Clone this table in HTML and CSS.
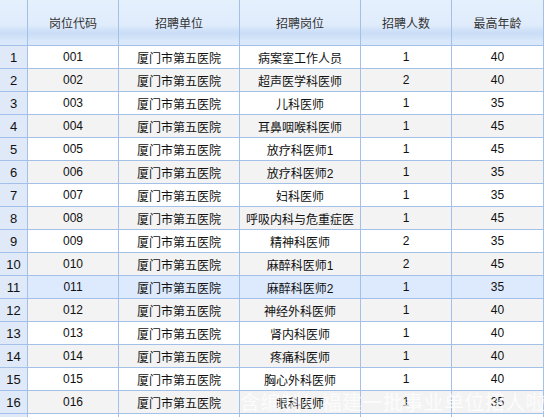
FILE: index.html
```html
<!DOCTYPE html>
<html>
<head>
<meta charset="utf-8">
<link rel="stylesheet" href="styles.css">
</head>
<body>
<div class="sheet">
  <div class="grid">
    <div class="hd idx"></div><div class="hd">岗位代码</div><div class="hd">招聘单位</div><div class="hd">招聘岗位</div><div class="hd">招聘人数</div><div class="hd">最高年龄</div>
    <div class="idx">1</div><div>001</div><div>厦门市第五医院</div><div>病案室工作人员</div><div>1</div><div>40</div>
    <div class="idx">2</div><div class="alt">002</div><div class="alt">厦门市第五医院</div><div class="alt">超声医学科医师</div><div class="alt">2</div><div class="alt">40</div>
    <div class="idx">3</div><div>003</div><div>厦门市第五医院</div><div>儿科医师</div><div>1</div><div>35</div>
    <div class="idx">4</div><div class="alt">004</div><div class="alt">厦门市第五医院</div><div class="alt">耳鼻咽喉科医师</div><div class="alt">1</div><div class="alt">45</div>
    <div class="idx">5</div><div>005</div><div>厦门市第五医院</div><div>放疗科医师1</div><div>1</div><div>45</div>
    <div class="idx">6</div><div class="alt">006</div><div class="alt">厦门市第五医院</div><div class="alt">放疗科医师2</div><div class="alt">1</div><div class="alt">35</div>
    <div class="idx">7</div><div>007</div><div>厦门市第五医院</div><div>妇科医师</div><div>1</div><div>35</div>
    <div class="idx">8</div><div class="alt">008</div><div class="alt">厦门市第五医院</div><div class="alt">呼吸内科与危重症医</div><div class="alt">1</div><div class="alt">45</div>
    <div class="idx">9</div><div>009</div><div>厦门市第五医院</div><div>精神科医师</div><div>2</div><div>35</div>
    <div class="idx">10</div><div class="alt">010</div><div class="alt">厦门市第五医院</div><div class="alt">麻醉科医师1</div><div class="alt">2</div><div class="alt">45</div>
    <div class="idx sel">11</div><div class="sel">011</div><div class="sel">厦门市第五医院</div><div class="sel">麻醉科医师2</div><div class="sel">1</div><div class="sel">35</div>
    <div class="idx">12</div><div class="alt">012</div><div class="alt">厦门市第五医院</div><div class="alt">神经外科医师</div><div class="alt">1</div><div class="alt">40</div>
    <div class="idx">13</div><div>013</div><div>厦门市第五医院</div><div>肾内科医师</div><div>1</div><div>40</div>
    <div class="idx">14</div><div class="alt">014</div><div class="alt">厦门市第五医院</div><div class="alt">疼痛科医师</div><div class="alt">1</div><div class="alt">40</div>
    <div class="idx">15</div><div>015</div><div>厦门市第五医院</div><div>胸心外科医师</div><div>1</div><div>40</div>
    <div class="idx">16</div><div class="alt">016</div><div class="alt">厦门市第五医院</div><div class="alt">眼科医师</div><div class="alt">1</div><div class="alt">35</div>
    <div class="idx"></div><div></div><div></div><div></div><div></div><div></div>
  </div>
  <div class="watermark">含编制！福建一批事业单位招人啦</div>
</div>
</body>
</html>
```
FILE: styles.css
```css
html, body {
  margin: 0;
  padding: 0;
  background: #ffffff;
  overflow: hidden;
}
.sheet {
  position: relative;
  width: 545px;
  height: 417px;
  overflow: hidden;
  font-family: "Liberation Sans", "Noto Sans CJK SC", sans-serif;
  font-size: 12px;
  color: #111;
}
.grid {
  display: grid;
  grid-template-columns: 27px 90px 120px 120px 90px 91px;
  grid-template-rows: 45px repeat(17, 22px);
  gap: 1px;
  padding-right: 1px;
  width: 543px;
  background: #a3c0e9;
}
.grid > div {
  background: #ffffff;
  display: flex;
  align-items: center;
  justify-content: center;
  white-space: nowrap;
  overflow: hidden;
}
.grid > div.alt {
  background: #f3f3f3;
}
.grid > div.sel {
  background: #dde9fc;
}
.grid > div.idx {
  background: #dfe9f8;
  font-size: 13px;
}
.grid > div.hd {
  background: linear-gradient(to bottom, #e5f0fd 0%, #e0ecfc 55%, #cfe1f8 68%, #c9ddf6 75%, #d8e7fa 90%, #dbe9fb 100%);
  color: #333;
  font-size: 12px;
}
.watermark {
  position: absolute;
  left: 240px;
  top: 389px;
  font-family: "Noto Sans CJK SC", sans-serif;
  font-size: 20px;
  line-height: 26px;
  letter-spacing: 0.4px;
  color: rgba(255, 255, 255, 0.75);
  white-space: nowrap;
}
```
